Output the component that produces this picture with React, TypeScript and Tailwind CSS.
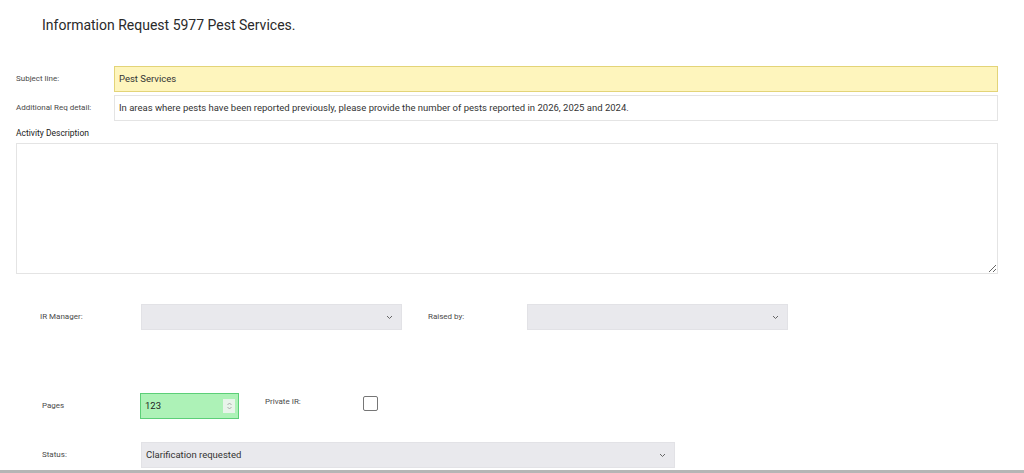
import React from "react";

const labelClasses = "text-[8px] leading-[12px] text-[#4a4a4a]";
const selectBox =
  "flex h-[26px] items-center justify-between border border-[#e2e2e6] bg-[#e9e9ed] pl-[4px] pr-[8px] text-[9.5px] text-[#333]";

function Chevron() {
  return (
    <svg width="7" height="5" viewBox="0 0 7 5" className="text-[#666]">
      <path d="M1 1 L3.5 3.5 L6 1" fill="none" stroke="currentColor" strokeWidth="1" />
    </svg>
  );
}

function SelectField({ width, value }: { width: string; value?: string }) {
  return (
    <div className={`${selectBox} ${width}`}>
      <span>{value ?? ""}</span>
      <Chevron />
    </div>
  );
}

export default function App() {
  return (
    <div className="box-border h-[473px] overflow-hidden border-b-[3px] border-[#b5b5b5] bg-white font-['Roboto',sans-serif] text-[#333]">
      <h1 className="px-[42px] pt-[16px] text-[14px] leading-[18px] text-[#2a2a2a]">
        Information Request 5977 Pest Services.
      </h1>

      <div className="pl-[16px] pr-[26px] pt-[32px]">
        {/* Subject line */}
        <div className="flex items-center">
          <div className={`${labelClasses} w-[98px]`}>Subject line:</div>
          <div className="flex h-[26px] flex-1 items-center border border-[#e3d478] bg-[#fef5bd] px-[4px] text-[9.5px] text-[#333]">
            Pest Services
          </div>
        </div>

        {/* Additional detail */}
        <div className="mt-[3px] flex items-center">
          <div className={`${labelClasses} w-[98px]`}>Additional Req detail:</div>
          <div className="flex h-[26px] flex-1 items-center border border-[#e4e4e4] bg-white px-[4px] text-[9.5px] text-[#333]">
            In areas where pests have been reported previously, please provide the number of pests reported in 2026, 2025
            and 2024.
          </div>
        </div>

        <div className="mt-[6px] text-[8.5px] leading-[12px] text-[#222]">Activity Description</div>
        <textarea
          className="mt-[4px] block h-[131px] w-full border border-[#e4e4e4] bg-white outline-none"
          defaultValue=""
        />

        {/* Managers */}
        <div className="mt-[30px] flex items-center pl-[24px]">
          <div className={`${labelClasses} w-[101px]`}>IR Manager:</div>
          <SelectField width="w-[261px]" />
          <div className={`${labelClasses} ml-[26px] w-[99px]`}>Raised by:</div>
          <SelectField width="w-[261px]" />
        </div>

        {/* Pages / Private */}
        <div className="mt-[63px] flex items-start pl-[26px]">
          <div className={`${labelClasses} mt-[7px] w-[98px]`}>Pages</div>
          <div className="flex h-[26px] w-[99px] items-center justify-between border border-[#5ccf78] bg-[#adf2b7] pl-[4px] pr-[3px] text-[9.5px] text-[#222]">
            <span>123</span>
            <div className="flex h-[14px] w-[12px] items-center justify-center bg-[#e8f4ea]">
              <svg width="7" height="10" viewBox="0 0 7 10" className="text-[#999]">
                <path d="M1.5 4 L3.5 2 L5.5 4 M1.5 6 L3.5 8 L5.5 6" fill="none" stroke="currentColor" strokeWidth="0.8" />
              </svg>
            </div>
          </div>
          <div className={`${labelClasses} ml-[26px] mt-[3px] w-[98px]`}>Private IR:</div>
          <div className="mt-[3px] h-[15px] w-[15px] rounded-[2px] border border-[#767676] bg-white" />
        </div>

        {/* Status */}
        <div className="mt-[23px] flex items-center pl-[26px]">
          <div className={`${labelClasses} w-[99px]`}>Status:</div>
          <SelectField width="w-[534px]" value="Clarification requested" />
        </div>
      </div>
    </div>
  );
}
